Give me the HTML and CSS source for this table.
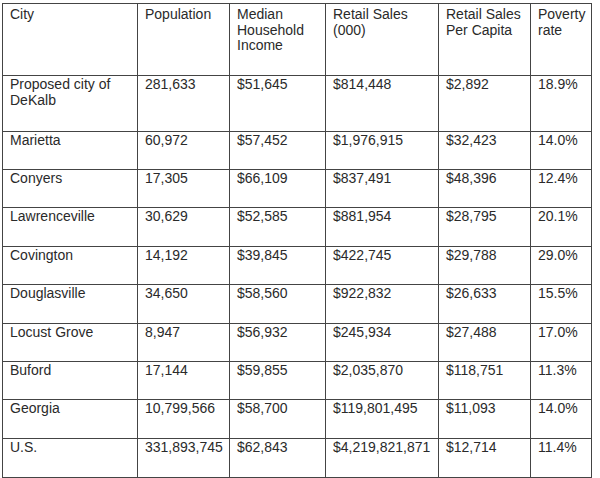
FILE: index.html
```html
<!DOCTYPE html>
<html lang="en">
<head>
<meta charset="utf-8">
<title>City comparison</title>
<link rel="stylesheet" href="styles.css">
</head>
<body>
<div class="grid">
  <div class="cell head">City</div>
  <div class="cell head">Population</div>
  <div class="cell head">Median Household Income</div>
  <div class="cell head">Retail Sales (000)</div>
  <div class="cell head">Retail Sales Per Capita</div>
  <div class="cell head">Poverty rate</div>

  <div class="cell">Proposed city of DeKalb</div>
  <div class="cell">281,633</div>
  <div class="cell">$51,645</div>
  <div class="cell">$814,448</div>
  <div class="cell">$2,892</div>
  <div class="cell">18.9%</div>

  <div class="cell">Marietta</div>
  <div class="cell">60,972</div>
  <div class="cell">$57,452</div>
  <div class="cell">$1,976,915</div>
  <div class="cell">$32,423</div>
  <div class="cell">14.0%</div>

  <div class="cell">Conyers</div>
  <div class="cell">17,305</div>
  <div class="cell">$66,109</div>
  <div class="cell">$837,491</div>
  <div class="cell">$48,396</div>
  <div class="cell">12.4%</div>

  <div class="cell">Lawrenceville</div>
  <div class="cell">30,629</div>
  <div class="cell">$52,585</div>
  <div class="cell">$881,954</div>
  <div class="cell">$28,795</div>
  <div class="cell">20.1%</div>

  <div class="cell">Covington</div>
  <div class="cell">14,192</div>
  <div class="cell">$39,845</div>
  <div class="cell">$422,745</div>
  <div class="cell">$29,788</div>
  <div class="cell">29.0%</div>

  <div class="cell">Douglasville</div>
  <div class="cell">34,650</div>
  <div class="cell">$58,560</div>
  <div class="cell">$922,832</div>
  <div class="cell">$26,633</div>
  <div class="cell">15.5%</div>

  <div class="cell">Locust Grove</div>
  <div class="cell">8,947</div>
  <div class="cell">$56,932</div>
  <div class="cell">$245,934</div>
  <div class="cell">$27,488</div>
  <div class="cell">17.0%</div>

  <div class="cell">Buford</div>
  <div class="cell">17,144</div>
  <div class="cell">$59,855</div>
  <div class="cell">$2,035,870</div>
  <div class="cell">$118,751</div>
  <div class="cell">11.3%</div>

  <div class="cell">Georgia</div>
  <div class="cell">10,799,566</div>
  <div class="cell">$58,700</div>
  <div class="cell">$119,801,495</div>
  <div class="cell">$11,093</div>
  <div class="cell">14.0%</div>

  <div class="cell">U.S.</div>
  <div class="cell">331,893,745</div>
  <div class="cell">$62,843</div>
  <div class="cell">$4,219,821,871</div>
  <div class="cell">$12,714</div>
  <div class="cell">11.4%</div>
</div>
</body>
</html>
```
FILE: styles.css
```css
html, body {
  margin: 0;
  padding: 0;
  background: #fff;
}
body {
  padding: 3px 0 0 2px;
  font-family: "Liberation Sans", Arial, sans-serif;
  font-size: 14px;
  line-height: 15.5px;
  color: #2a2a2a;
}
.grid {
  display: grid;
  grid-template-columns: 135px 92px 96px 113px 92px 61px;
  grid-template-rows: 72px 56px 38px 38px 39px 38px 39px 38px 38px 39px 39px;
  width: max-content;
  border-left: 1px solid #444;
  border-top: 1px solid #444;
}
.cell {
  border-right: 1px solid #444;
  border-bottom: 1px solid #444;
  padding: 1px 6px 0 7px;
  overflow: hidden;
}
.head {
  padding-top: 3px;
}
```
